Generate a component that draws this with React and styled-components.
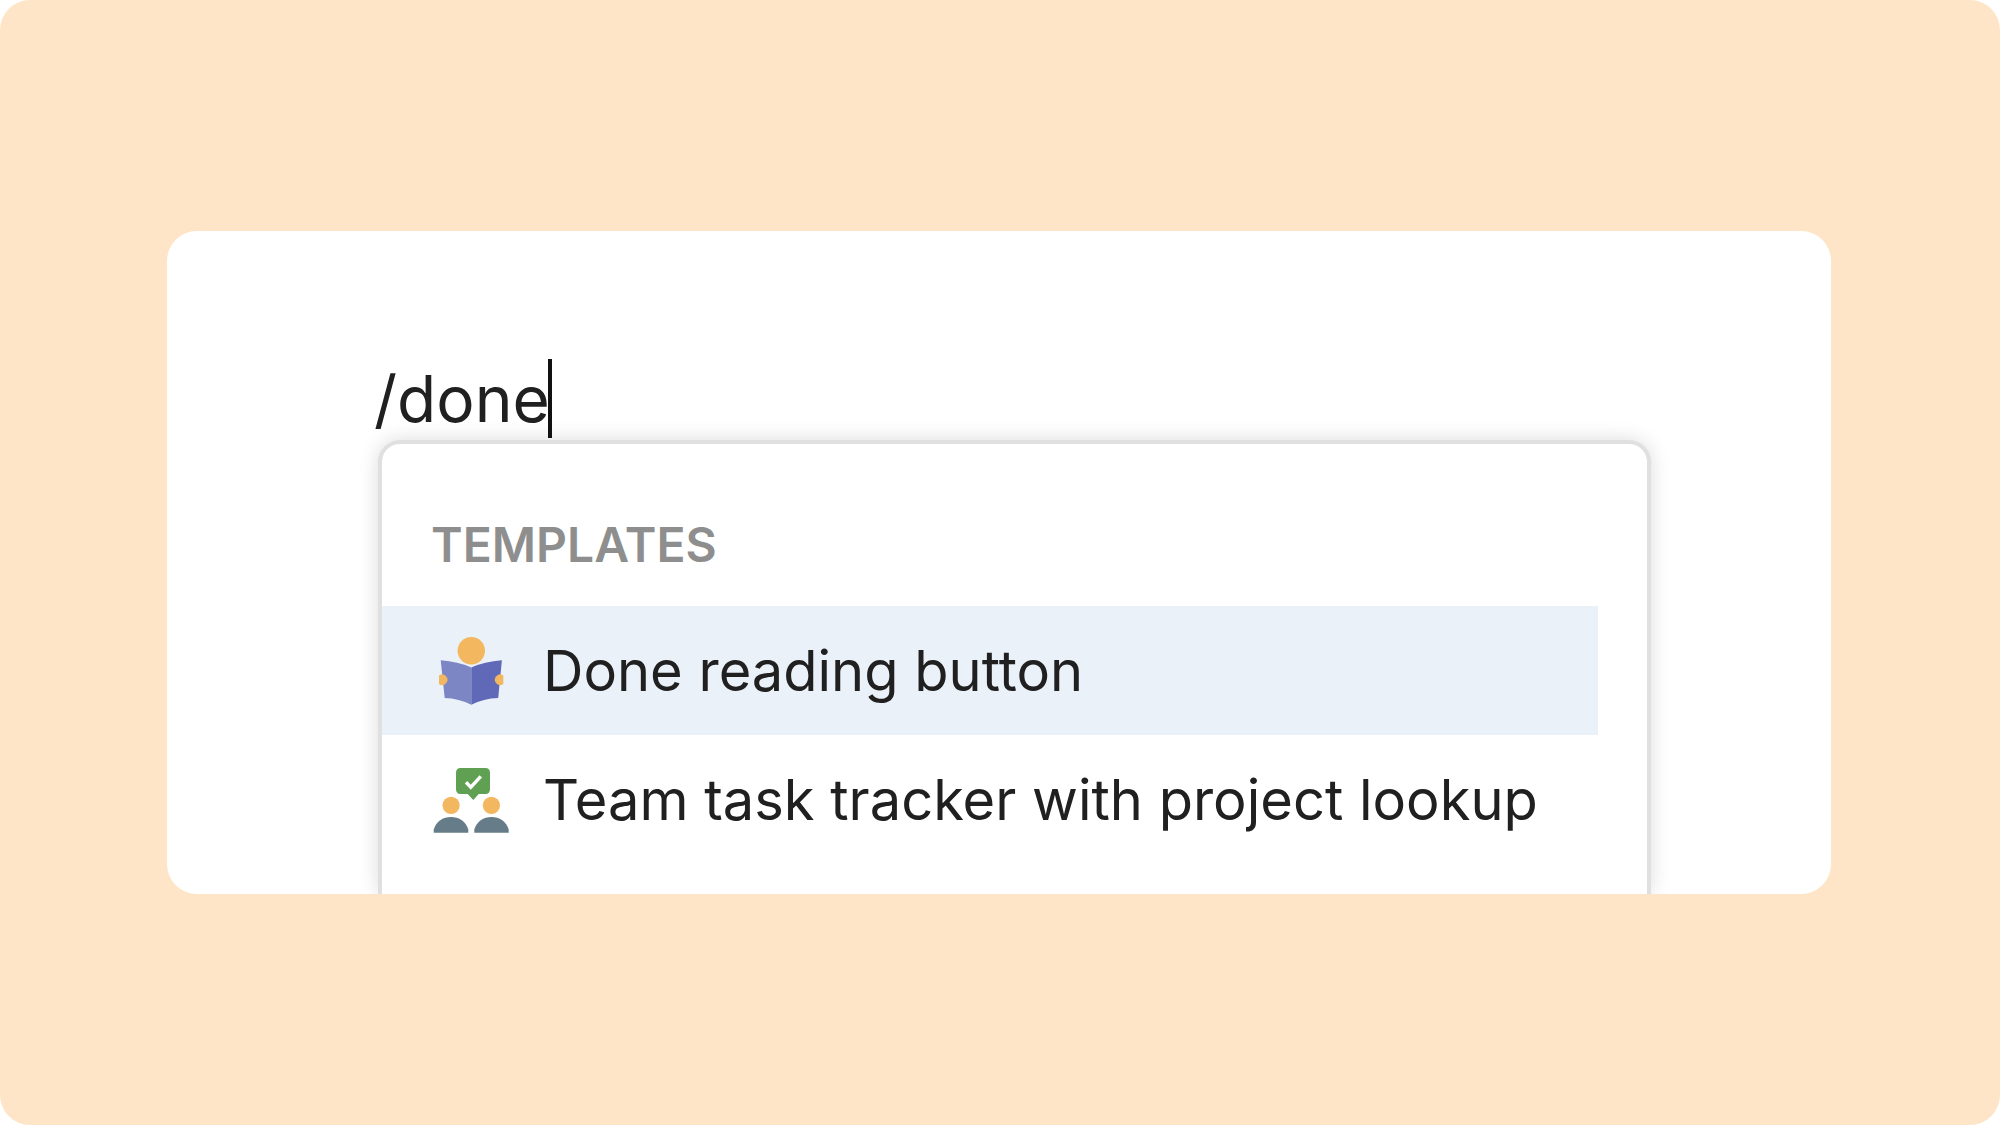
import React, { useState } from 'react';
import styled, { createGlobalStyle } from 'styled-components';

const GlobalStyle = createGlobalStyle`
    body{
        margin: 0;
        background: #fff;
        font-family: Inter, "Liberation Sans", sans-serif;
    }
    *{
        box-sizing: border-box;
    }
`

const Page = styled.main`
    min-height: 100vh;
    padding: 231px 169px 0 167px;
    border-radius: 30px;
    background: #ffe5c8;
`

const Card = styled.section`
    padding: 128px 180px 0 211px;
    border-radius: 30px;
    background: #fff;
    overflow: hidden;
`

const CommandLine = styled.div`
    display: flex;
    margin-left: -4px;
    height: 81px;
    input{
        field-sizing: content;
        height: 80px;
        padding: 0;
        border: 0 none;
        outline: none;
        background: transparent;
        color: #202020;
        caret-color: transparent;
        font-family: inherit;
        font-size: 64px;
        line-height: 80px;
    }
`

const Caret = styled.span`
    width: 4px;
    height: 79px;
    margin-left: -2px;
    background: #111;
`

const Menu = styled.div`
    padding: 72px 49px 30px 0;
    border: 4px solid #e0e0e0;
    border-bottom: 0 none;
    border-radius: 22px 22px 0 0;
    background: #fff;
    box-shadow: 0 0 20px rgba(0, 0, 0, 0.14);
`

const MenuTitle = styled.h2`
    margin: 0;
    padding: 0 0 32px 49px;
    color: #8e8e8e;
    font-size: 48px;
    font-weight: 600;
    line-height: 58px;
`

const MenuList = styled.ul`
    margin: 0;
    padding: 0;
    list-style: none;
`

const MenuItem = styled.button`
    display: flex;
    align-items: center;
    gap: 32px;
    width: 100%;
    height: 129px;
    padding: 0 0 0 49px;
    border: 0 none;
    background: ${({ $active }) => ($active ? '#eaf1f8' : 'transparent')};
    color: #202020;
    font-family: inherit;
    font-size: 56px;
    line-height: 68px;
    text-align: left;
    white-space: nowrap;
    cursor: pointer;
    svg{
        flex: none;
        width: 80px;
        height: 80px;
    }
`

const ReadingIcon = () => (
    <svg viewBox="0 0 80 80" aria-hidden="true">
        <circle cx="40.3" cy="19.7" r="13.7" fill="#f3b75f" />
        <path d="M9.7 29.3Q27 30.5 40.3 36.5V73.7Q28 67.5 13.7 67Z" fill="#7c86c5" />
        <path d="M70.9 29.3Q53.6 30.5 40.3 36.5V73.7Q52.6 67.5 67.2 67Z" fill="#5f69b8" />
        <path d="M8 44.4A5.3 5.3 0 1 1 8 53Z" fill="#f3b75f" />
        <path d="M72.3 44.4A5.3 5.3 0 1 0 72.3 53Z" fill="#f3b75f" />
    </svg>
)

const TeamIcon = () => (
    <svg viewBox="0 1 80 80" aria-hidden="true">
        <path
            d="M29.7 9H54.3Q59 9 59 13.7V30.3Q59 35 54.3 35H47.7L42.3 41L36.7 35H29.7Q25 35 25 30.3V13.7Q25 9 29.7 9Z"
            fill="#5fa052"
        />
        <path d="M35 23.3L39.8 28.2L49.8 17.3" fill="none" stroke="#fff" strokeWidth="3.4" />
        <circle cx="20.1" cy="46.3" r="8.6" fill="#f3b75f" />
        <circle cx="60.4" cy="46.3" r="8.6" fill="#f3b75f" />
        <path d="M2.7 73.7V70.5C5 62.5 12 58 20 58S35 62.5 37.3 70.5V73.7Z" fill="#667d89" />
        <path d="M43.3 73.7V70.5C45.6 62.5 52.6 58 60.5 58S75.4 62.5 77.7 70.5V73.7Z" fill="#667d89" />
    </svg>
)

const templates = [
    { name: 'Done reading button', Icon: ReadingIcon },
    { name: 'Team task tracker with project lookup', Icon: TeamIcon },
];

const App = () => {
    const [command, setCommand] = useState('/done');
    const [active, setActive] = useState(0);

    return (
        <>
            <GlobalStyle />
            <Page>
                <Card>
                    <CommandLine>
                        <input
                            type="text"
                            aria-label="Command"
                            spellCheck={false}
                            value={command}
                            onChange={(e) => setCommand(e.target.value)}
                        />
                        <Caret />
                    </CommandLine>
                    <Menu>
                        <MenuTitle>TEMPLATES</MenuTitle>
                        <MenuList>
                            {templates.map(({ name, Icon }, index) => (
                                <li key={name}>
                                    <MenuItem type="button" $active={index === active} onClick={() => setActive(index)}>
                                        <Icon />
                                        <span>{name}</span>
                                    </MenuItem>
                                </li>
                            ))}
                        </MenuList>
                    </Menu>
                </Card>
            </Page>
        </>
    );
}

export default App;
